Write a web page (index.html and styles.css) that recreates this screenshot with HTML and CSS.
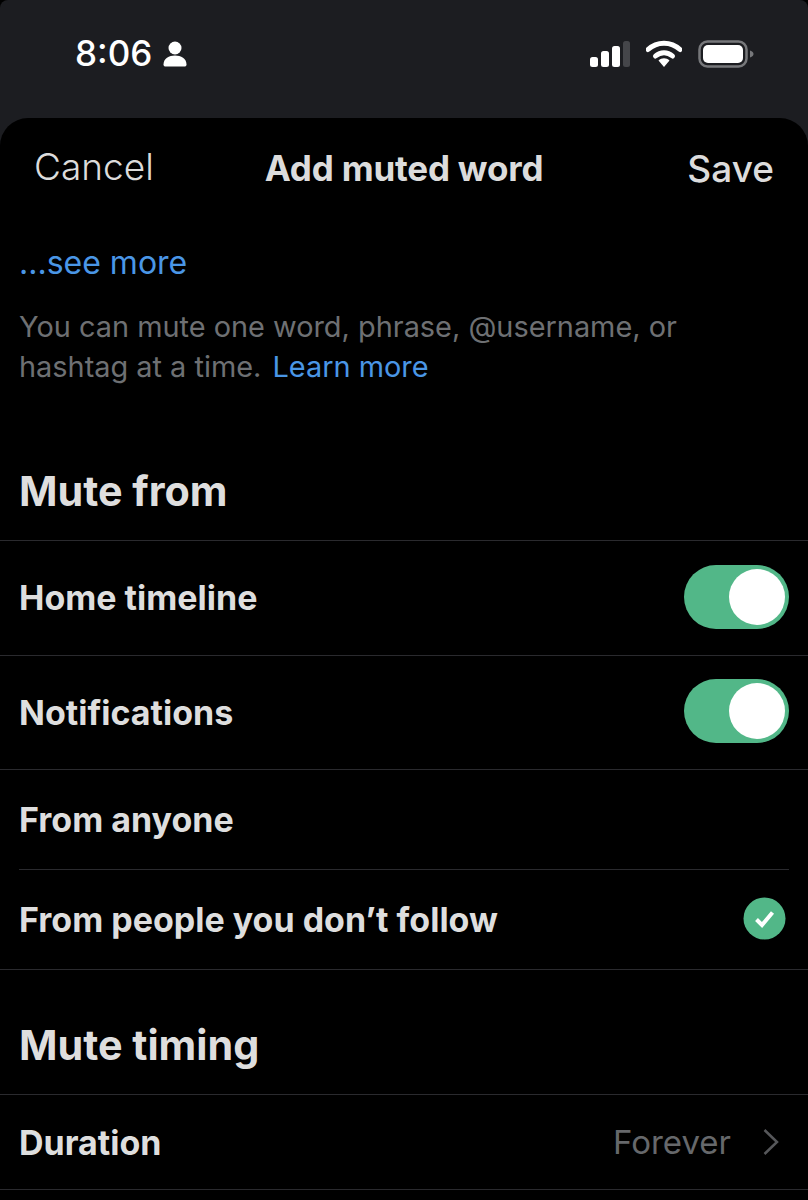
FILE: index.html
```html
<!DOCTYPE html>
<html>

<head>
  <meta charset="utf-8" />
  <title>Add muted word</title>
  <link rel="stylesheet" href="styles.css">
</head>

<body>
  <div class="screen">
    <div class="status-bar">
      <div class="status-left">
        <span class="clock">8:06</span>
        <svg class="person" width="24" height="26" viewBox="0 0 24 26">
          <circle cx="12" cy="7" r="6.5" fill="#fff" />
          <path d="M0.5 23.5C0.5 17.5 6 14.5 12 14.5S23.500 17.5 23.500 23.500C23.500 25 22.500 25.500 21.500 25.500H2.500C1.500 25.500 0.500 25 0.500 23.500Z" fill="#fff" />
        </svg>
      </div>
      <div class="status-right">
        <svg width="40" height="26" viewBox="0 0 40 26">
          <rect x="0" y="16" width="8" height="10" rx="2.500" fill="#fff" />
          <rect x="11" y="10" width="8" height="16" rx="2.500" fill="#fff" />
          <rect x="22" y="5" width="8" height="21" rx="2.500" fill="#fff" />
          <rect x="33" y="0" width="7" height="26" rx="2.500" fill="#45464a" />
        </svg>
        <svg width="36" height="28" viewBox="0 0 36 28">
          <path d="M2 9.500C11 1 25 1 34 9.500" fill="none" stroke="#fff" stroke-width="5" stroke-linecap="round" />
          <path d="M9.500 16C14.500 11.500 21.500 11.500 26.500 16" fill="none" stroke="#fff" stroke-width="5" stroke-linecap="round" />
          <path d="M12.500 20.500C15.500 17.500 20.500 17.500 23.500 20.500L18 27Z" fill="#fff" />
        </svg>
        <svg width="57" height="28" viewBox="0 0 57 28">
          <rect x="1.500" y="1.500" width="47" height="25" rx="8" fill="none" stroke="#77787b" stroke-width="2.500" />
          <rect x="5" y="5" width="40" height="18" rx="5" fill="#fff" />
          <path d="M52 10.500C54.500 11.500 55.500 12.500 55.500 14S54.500 16.500 52 17.500Z" fill="#77787b" />
        </svg>
      </div>
    </div>

    <div class="sheet">
      <div class="nav">
        <span class="nav-cancel">Cancel</span>
        <span class="nav-title">Add muted word</span>
        <span class="nav-save">Save</span>
      </div>

      <div class="see-more">...see more</div>
      <div class="hint">
        <div>You can mute one word, phrase, @username, or</div>
        <div>hashtag at a time. <span class="link">Learn more</span></div>
      </div>

      <div class="section-title from">Mute from</div>
      <div class="row row-tall">
        <span class="row-label">Home timeline</span>
        <span class="switch"><span class="knob"></span></span>
      </div>
      <div class="row row-tall">
        <span class="row-label">Notifications</span>
        <span class="switch"><span class="knob"></span></span>
      </div>
      <div class="row row-inset">
        <span class="row-label">From anyone</span>
      </div>
      <div class="row row-inset row-last">
        <span class="row-label">From people you don’t follow</span>
        <svg class="check" width="43" height="43" viewBox="0 0 43 43">
          <circle cx="21.500" cy="21.500" r="21" fill="#52b788" />
          <path d="M13.500 22.500L19 28L29.500 15.500" fill="none" stroke="#fff" stroke-width="4" />
        </svg>
      </div>

      <div class="section-title timing">Mute timing</div>
      <div class="row row-duration">
        <span class="row-label">Duration</span>
        <span class="row-value">Forever</span>
        <svg class="chevron" width="18" height="28" viewBox="0 0 18 28">
          <path d="M2.500 2L15 14L2.500 26" fill="none" stroke="#56575a" stroke-width="2.500" />
        </svg>
      </div>
    </div>
  </div>
</body>

</html>
```

FILE: styles.css
```css
html,
body {
  margin: 0;
  padding: 0;
}

body {
  width: 808px;
  height: 1200px;
  overflow: hidden;
  background-color: #000;
  font-family: Inter, "Noto Sans", sans-serif;
}

.screen {
  background-color: #1c1d21;
  border-radius: 8px 8px 0 0;
}

.status-bar {
  height: 118px;
  box-sizing: border-box;
  padding: 33px 53px 0 75px;
  display: flex;
  justify-content: space-between;
  align-items: flex-start;
}

.status-left {
  display: flex;
  align-items: center;
  gap: 11px;
}

.clock {
  color: #fff;
  font-size: 35px;
  line-height: 40px;
  font-weight: 500;
}

.person {
  margin-top: 1px;
}

.status-right {
  display: flex;
  align-items: center;
  gap: 16px;
  padding-top: 7px;
}

.sheet {
  height: 1082px;
  background-color: #000;
  border-radius: 28px 28px 0 0;
}

.nav {
  height: 100px;
  display: grid;
  grid-template-columns: 1fr auto 1fr;
  align-items: center;
  padding: 0 34px;
  color: #dcdcdc;
  font-size: 37px;
}

.nav-cancel {
  font-weight: 300;
  margin-bottom: 3px;
}

.nav-title {
  font-weight: 700;
  font-size: 35px;
  letter-spacing: -0.2px;
}

.nav-save {
  font-weight: 500;
  text-align: right;
}

.see-more {
  margin: 23px 19px 0;
  color: #4a96e6;
  font-size: 32px;
  line-height: 44px;
}

.hint {
  margin: 22px 19px 0;
  color: #6e7073;
  font-size: 28.9px;
  line-height: 40px;
}

.link {
  color: #4a96e6;
  margin-left: 3px;
}

.section-title {
  padding: 0 19px;
  color: #dedede;
  font-size: 41.300px;
  font-weight: 700;
  line-height: 50px;
}

.from {
  margin-top: 79px;
  padding-bottom: 24px;
  border-bottom: 1px solid #2a2a2e;
}

.timing {
  margin-top: 50px;
  padding-bottom: 24px;
  border-bottom: 1px solid #2a2a2e;
}

.row {
  display: flex;
  align-items: center;
  padding: 0 19px;
  color: #dedede;
  font-size: 34px;
  font-weight: 700;
  border-bottom: 1px solid #2a2a2e;
}

.row-label {
  flex: 1;
}

.row-tall {
  height: 113.500px;
}

.row-inset {
  height: 99px;
  margin: 0 19px 0;
  padding: 0;
}

.row-last {
  margin: 0;
  padding: 0 19px;
}

.row-duration {
  height: 94px;
}

.row-value {
  color: #66686b;
  font-size: 33px;
  font-weight: 400;
  margin-right: 31px;
}

.chevron {
  margin-right: 9px;
}

.switch {
  width: 105px;
  height: 64px;
  margin-bottom: 2px;
  border-radius: 32px;
  background-color: #52b788;
  display: flex;
  justify-content: flex-end;
  align-items: center;
  padding-right: 4px;
  box-sizing: border-box;
}

.knob {
  width: 56px;
  height: 56px;
  border-radius: 50%;
  background-color: #fff;
}

.check {
  margin-right: 3px;
  margin-bottom: 2px;
}
```
